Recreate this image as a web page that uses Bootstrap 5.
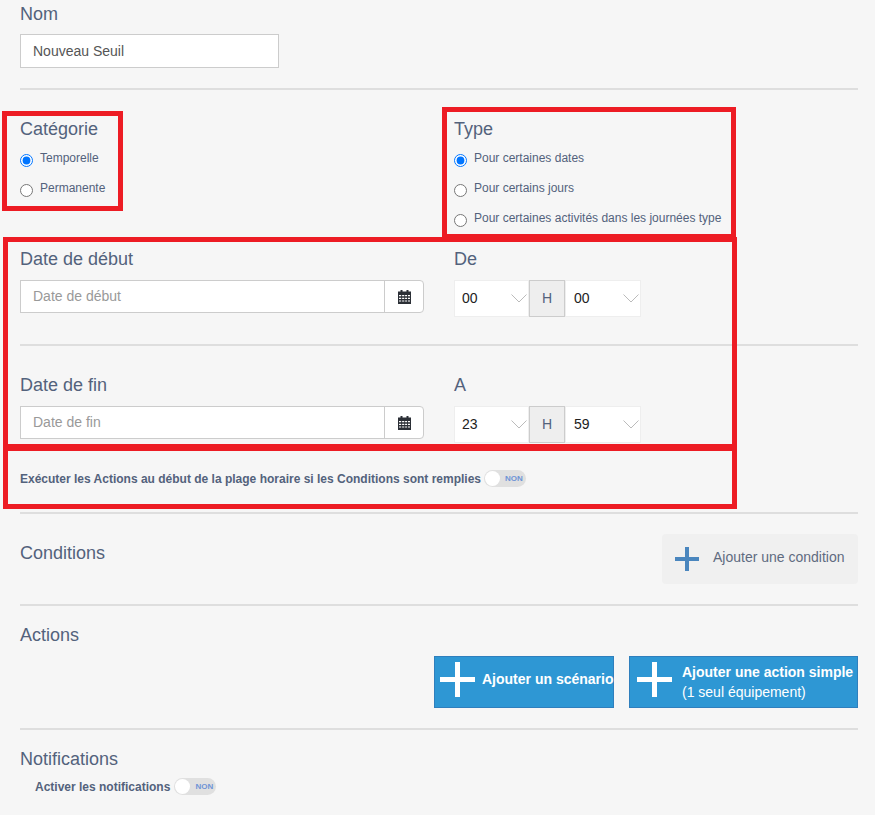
<!DOCTYPE html>
<html lang="fr">
<head>
<meta charset="utf-8">
<title>Nouveau Seuil</title>
<link href="https://cdn.jsdelivr.net/npm/bootstrap@5.3.0/dist/css/bootstrap.min.css" rel="stylesheet">
<style>
html,body{height:815px;overflow:hidden}
body{background:#f6f6f6;font-family:"Liberation Sans",Arial,sans-serif;color:#53627c}
.sheet{position:relative;height:815px;padding:0 17px 0 20px}
.ttl{font-size:18px;line-height:20px;margin:0;font-weight:400;color:#53627c}
.sep{height:2px;background:#dedede}
.name-box{width:259px;height:34px;margin-top:10px;border:1px solid #ccc;border-radius:0;font-size:14px;padding:0 12px;color:#555;box-shadow:none}
.col-l{width:434px;flex:none}
.rad{display:flex;align-items:flex-start;font-size:12px;line-height:14px;color:#53627c}
.rad input{width:13px;height:13px;margin:3px 7px 0 0;flex:none;accent-color:#0075ff}
.dategrp{width:404px;margin-top:11px}
.dategrp .form-control{height:33px;border:1px solid #ccc;border-radius:0;font-size:14px;padding:0 12px 2px;color:#555;box-shadow:none}
.dategrp .form-control::placeholder{color:#999}
.calbtn{width:40px;flex:none;height:33px;background:#fff;border:1px solid #ccc;border-radius:0 4px 4px 0;display:flex;align-items:center;justify-content:center;margin-left:-1px!important}
.timegrp{display:flex;margin-top:11px;height:37px}
.sel{border:1px solid #eee;border-radius:0;height:37px;padding:0 0 0 7px;font-size:14px;color:#222;background-color:#fff;background-image:url("data:image/svg+xml,%3Csvg xmlns='http://www.w3.org/2000/svg' width='16' height='9'%3E%3Cpath d='M.5.5 8 8 15.500.5' fill='none' stroke='%23bbb'/%3E%3C/svg%3E");background-repeat:no-repeat;background-position:right 1px center;background-size:16px 9px;box-shadow:none}
.sel.s1{width:75px}
.sel.s2{width:76px;padding-left:8px}
.hbox{width:36px;height:37px;flex:none;background:#eee;border:1px solid #ccc;font-size:14px;color:#53627c;display:flex;align-items:center;justify-content:center}
.bold-lbl{font-size:12px;font-weight:700;line-height:14px;color:#53627c}
.tog{width:42px;height:17px;border-radius:9px;background:#e0e0e0;display:inline-flex;align-items:center;position:relative;flex:none;margin-left:3px}
.tog::before{content:"";width:15px;height:15px;border-radius:50%;background:#fff;margin-left:1px}
.tog span{font-size:8px;font-weight:700;color:#6f94d6;margin-left:5px;line-height:1}
.btn-cond{width:196px;height:50px;background:#f0f0f0;border-radius:4px;border:0;font-size:14px;color:#5f6b80;display:flex;align-items:center;padding:0 0 0 13px;gap:14px}
.btn-cond span{margin-bottom:3px}
.btn-act{height:52px;background:#2e97d4;border:1px solid #2f7fbd;border-radius:0;color:#fff;display:flex;align-items:center;padding:0;text-align:left;font-size:14px;line-height:20px}
.btn-act:hover{background:#2e97d4;color:#fff}
.btn-a{width:180px;font-weight:700;white-space:nowrap}
.btn-a span{margin-bottom:6px}
.btn-b{width:229px;margin-left:15px}
.btn-act svg{margin:0 7px 5px 5px;flex:none}
.btn-b svg{margin-left:7px;margin-right:10px}
.annot{position:absolute;border:5px solid #ed1c24;pointer-events:none}
.a1{left:2px;top:111px;width:121px;height:100px}
.a2{left:442px;top:107px;width:294px;height:132px}
.a3{left:3px;top:237px;width:734px;height:212px}
.a4{left:3px;top:446px;width:734px;height:63px}
.topgap{height:4px}
.sp1{margin-top:20px}
.blk-cat{margin-top:29px;height:130px}
.r1{margin-top:12px}
.r2{margin-top:14px}
.r3{margin-top:14px}
.sp2{margin-top:27px}
.blk-d2{margin-top:29px}
.blk-exec{margin-top:27px;height:17px}
.sp3{margin-top:25px}
.blk-cond{margin-top:20px}
.blk-cond .ttl{margin-top:9px}
.sp4{margin-top:20px}
.blk-act{margin-top:19px}
.act-row{margin-top:11px}
.sp5{margin-top:20px}
.blk-not{margin-top:19px}
.blk-nt{margin-top:9px;margin-left:15px}
.blk-nt .tog{margin-left:4px}
</style>
</head>
<body>
<div class="sheet">
  <div class="topgap"></div>
  <h2 class="ttl">Nom</h2>
  <input class="form-control name-box" type="text" value="Nouveau Seuil">
  <div class="sep sp1"></div>

  <div class="d-flex blk-cat">
    <div class="col-l">
      <h2 class="ttl">Catégorie</h2>
      <label class="rad r1"><input type="radio" name="c" checked>Temporelle</label>
      <label class="rad r2"><input type="radio" name="c">Permanente</label>
    </div>
    <div>
      <h2 class="ttl">Type</h2>
      <label class="rad r1"><input type="radio" name="t" checked>Pour certaines dates</label>
      <label class="rad r2"><input type="radio" name="t">Pour certains jours</label>
      <label class="rad r3"><input type="radio" name="t">Pour certaines activités dans les journées type</label>
    </div>
  </div>

  <div class="d-flex blk-d1">
    <div class="col-l">
      <h2 class="ttl">Date de début</h2>
      <div class="input-group flex-nowrap dategrp">
        <input class="form-control" type="text" placeholder="Date de début">
        <span class="calbtn"><svg width="13" height="14" viewBox="0 0 13 14"><path fill="#2b2f36" d="M0 1.500h2.500V0h2v1.500h4V0h2v1.500H13V14H0z"/><path fill="#fff" d="M1 5h2.200v1.200H1zm3.100 0h2.200v1.200H4.100zm3 0h2v1.200h-2zm2.900 0h2v1.200h-2zM1 7.700h2.200v1.200H1zm3.100 0h2.200v1.200H4.100zm3 0h2v1.200h-2zm2.900 0h2v1.200h-2zM1 10.400h2.200v1.200H1zm3.100 0h2.200v1.200H4.100zm3 0h2v1.200h-2zm2.900 0h2v1.200h-2z"/></svg></span>
      </div>
    </div>
    <div>
      <h2 class="ttl">De</h2>
      <div class="timegrp">
        <select class="form-select sel s1"><option>00</option></select>
        <span class="hbox">H</span>
        <select class="form-select sel s2"><option>00</option></select>
      </div>
    </div>
  </div>
  <div class="sep sp2"></div>

  <div class="d-flex blk-d2">
    <div class="col-l">
      <h2 class="ttl">Date de fin</h2>
      <div class="input-group flex-nowrap dategrp">
        <input class="form-control" type="text" placeholder="Date de fin">
        <span class="calbtn"><svg width="13" height="14" viewBox="0 0 13 14"><path fill="#2b2f36" d="M0 1.500h2.500V0h2v1.500h4V0h2v1.500H13V14H0z"/><path fill="#fff" d="M1 5h2.200v1.200H1zm3.100 0h2.200v1.200H4.100zm3 0h2v1.200h-2zm2.900 0h2v1.200h-2zM1 7.700h2.200v1.200H1zm3.100 0h2.200v1.200H4.100zm3 0h2v1.200h-2zm2.900 0h2v1.200h-2zM1 10.400h2.200v1.200H1zm3.100 0h2.200v1.200H4.100zm3 0h2v1.200h-2zm2.900 0h2v1.200h-2z"/></svg></span>
      </div>
    </div>
    <div>
      <h2 class="ttl">A</h2>
      <div class="timegrp">
        <select class="form-select sel s1"><option>23</option></select>
        <span class="hbox">H</span>
        <select class="form-select sel s2"><option>59</option></select>
      </div>
    </div>
  </div>

  <div class="d-flex align-items-center blk-exec">
    <span class="bold-lbl">Exécuter les Actions au début de la plage horaire si les Conditions sont remplies</span>
    <span class="tog"><span>NON</span></span>
  </div>
  <div class="sep sp3"></div>

  <div class="d-flex justify-content-between blk-cond">
    <h2 class="ttl">Conditions</h2>
    <button class="btn-cond" type="button">
      <svg width="24" height="24" viewBox="0 0 24 24"><path fill="#4a86be" d="M10 0h4v10h10v4H14v10h-4V14H0v-4h10z"/></svg>
      <span>Ajouter une condition</span>
    </button>
  </div>
  <div class="sep sp4"></div>

  <h2 class="ttl blk-act">Actions</h2>
  <div class="d-flex justify-content-end act-row">
    <button class="btn btn-act btn-a" type="button">
      <svg width="35" height="35" viewBox="0 0 35 35"><path fill="#fff" d="M15 0h5v15h15v5H20v15h-5V20H0v-5h15z"/></svg>
      <span>Ajouter un scénario</span>
    </button>
    <button class="btn btn-act btn-b" type="button">
      <svg width="35" height="35" viewBox="0 0 35 35"><path fill="#fff" d="M15 0h5v15h15v5H20v15h-5V20H0v-5h15z"/></svg>
      <span><b>Ajouter une action simple</b><br>(1 seul équipement)</span>
    </button>
  </div>
  <div class="sep sp5"></div>

  <h2 class="ttl blk-not">Notifications</h2>
  <div class="d-flex align-items-center blk-nt">
    <span class="bold-lbl">Activer les notifications</span>
    <span class="tog"><span>NON</span></span>
  </div>

  <div class="annot a1"></div>
  <div class="annot a2"></div>
  <div class="annot a3"></div>
  <div class="annot a4"></div>
</div>
<script src="https://cdn.jsdelivr.net/npm/bootstrap@5.3.0/dist/js/bootstrap.bundle.min.js"></script>
</body>
</html>
